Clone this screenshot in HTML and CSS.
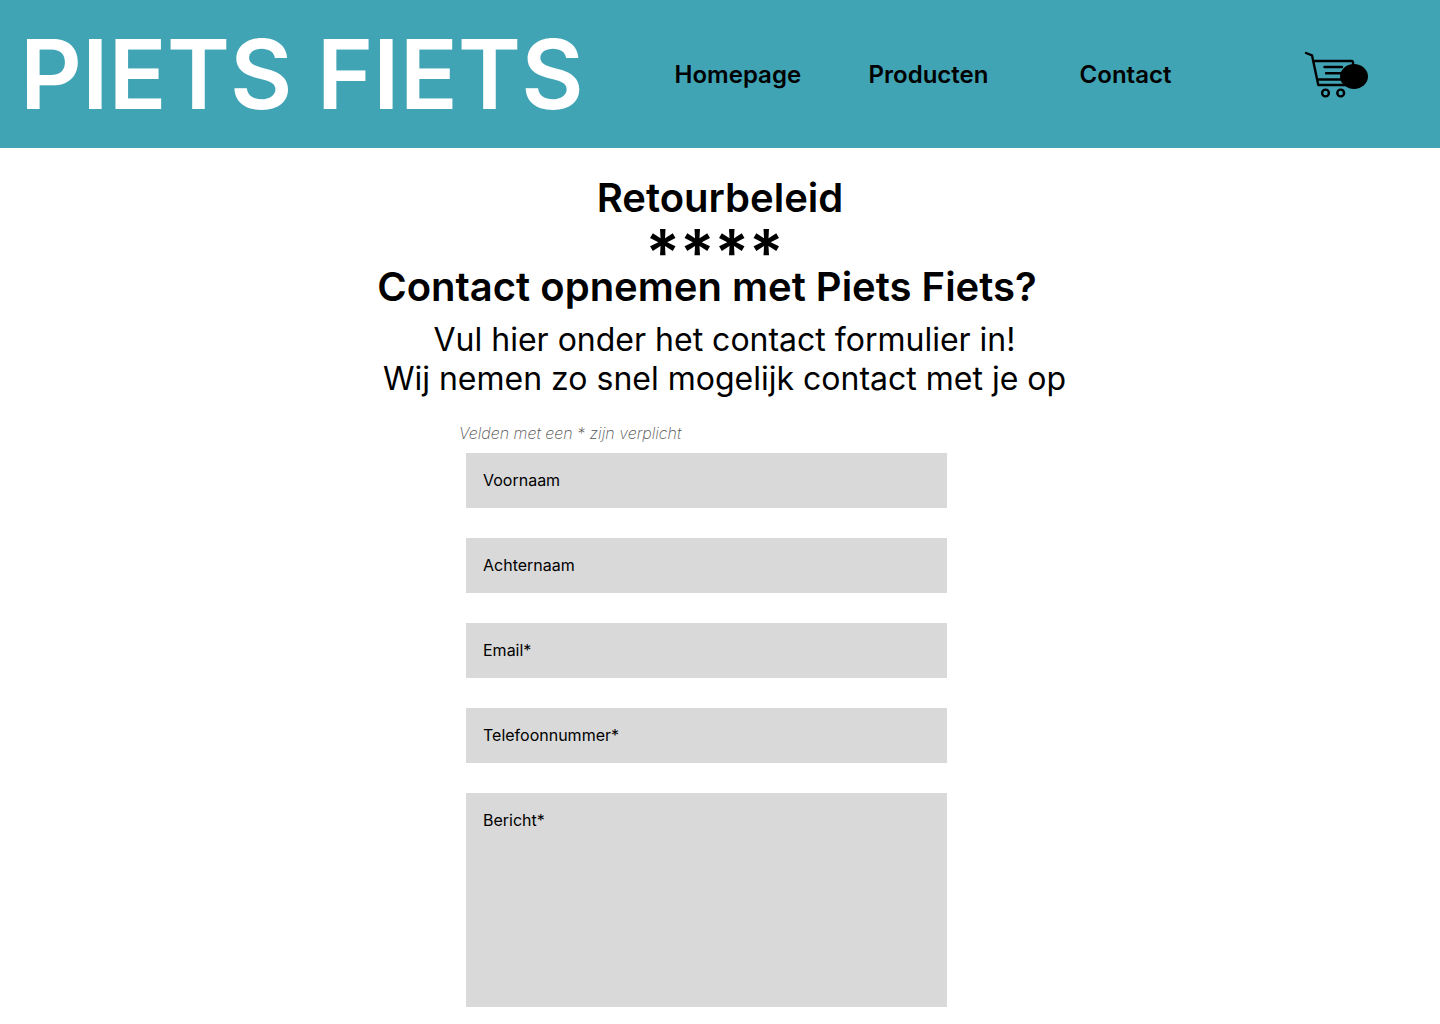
FILE: index.html
```html
<!DOCTYPE html>
<html lang="nl">
<head>
<meta charset="utf-8">
<title>Piets Fiets - Contact</title>
<link rel="stylesheet" href="styles.css">
</head>
<body>
<header class="header">
  <a class="brand" href="#">PIETS FIETS</a>
  <nav class="nav">
    <a href="#">Homepage</a>
    <a href="#">Producten</a>
    <a href="#">Contact</a>
  </nav>
  <a class="cart" href="#" aria-label="Winkelwagen">
    <svg width="64" height="48" viewBox="0 0 64 48" fill="none" stroke="#000" stroke-width="2.4" stroke-linecap="round" stroke-linejoin="round">
      <path d="M2 2 L8 4.3 L14.3 34 H42 M10 10 H47.500 Q49.500 10 49 13 M13.500 28.500 H42 M20.500 16 H38 M22 22.300 H40"/>
      <circle cx="21.500" cy="42" r="3.400"/><circle cx="36.700" cy="42" r="3.400"/>
      <ellipse cx="50" cy="25.500" rx="14" ry="12.500" fill="#000" stroke="none"/>
    </svg>
  </a>
</header>
<main class="main">
  <h1 class="title">Retourbeleid</h1>
  <p class="stars">****</p>
  <h2 class="subtitle">Contact opnemen met Piets Fiets?</h2>
  <p class="intro">Vul hier onder het contact formulier in!<br>Wij nemen zo snel mogelijk contact met je op</p>
  <form class="form">
    <p class="note">Velden met een * zijn verplicht</p>
    <div class="fields">
      <input class="field" type="text" placeholder="Voornaam" aria-label="Voornaam">
      <input class="field" type="text" placeholder="Achternaam" aria-label="Achternaam">
      <input class="field" type="email" placeholder="Email*" aria-label="Email" required>
      <input class="field" type="tel" placeholder="Telefoonnummer*" aria-label="Telefoonnummer" required>
      <textarea class="field message" placeholder="Bericht*" aria-label="Bericht" required></textarea>
    </div>
  </form>
</main>
</body>
</html>
```
FILE: styles.css
```css
* { box-sizing: border-box; }
body { margin: 0; background: #fff; color: #000; font-family: Inter, sans-serif; }
h1, h2, p { margin: 0; }
a { color: inherit; text-decoration: none; }
.header { display: flex; align-items: center; padding: 16px 72px 16px 20px; background: #40a4b5; }
.brand { color: #fff; font-size: 96px; line-height: 116px; font-weight: 600; white-space: nowrap; }
.nav { display: grid; grid-template-columns: 194px 211px auto; margin-left: 91px; padding-top: 2px; font-size: 24px; line-height: 30px; font-weight: 600; }
.cart { display: flex; margin-left: auto; padding-top: 2px; }
.main { padding: 26px 0 16px; text-align: center; }
.title, .subtitle { font-size: 40px; line-height: 48px; font-weight: 600; }
.stars { margin-bottom: -21px; padding-right: 11px; font-size: 64px; line-height: 62px; font-weight: 600; }
.subtitle { padding-right: 26px; }
.intro { margin-top: 9px; padding-left: 9px; font-size: 32px; line-height: 39px; font-weight: 400; }
.form { max-width: 522px; margin: 25px auto 0; text-align: left; }
.note { color: #555; font-size: 16px; line-height: 20px; font-style: italic; font-weight: 200; }
.fields { display: flex; flex-direction: column; gap: 30px; margin-top: 10px; padding: 0 34px 0 7px; }
.field { width: 100%; height: 55px; padding: 0 17px 2px; border: 0; border-radius: 0; background: #d9d9d9; color: #000; font: 400 16px/20px Inter, sans-serif; }
.field::placeholder { color: #000; opacity: 1; }
.message { height: 214px; padding: 17px; resize: none; }
```
